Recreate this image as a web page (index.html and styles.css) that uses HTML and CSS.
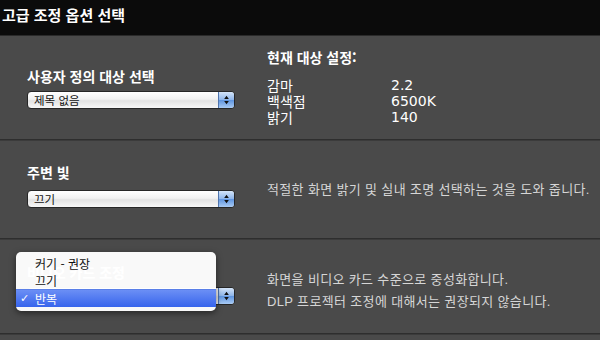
FILE: index.html
```html
<!DOCTYPE html>
<html lang="ko">
<head>
<meta charset="UTF-8">
<title>고급 조정 옵션 선택</title>
<link rel="stylesheet" href="styles.css">
</head>
<body>
  <div class="titlebar">고급 조정 옵션 선택</div>

  <div class="section sec-target">
    <div class="left">
      <div class="label">사용자 정의 대상 선택</div>
      <div class="select">
        <span class="value">제목 없음</span>
        <span class="stepper"><svg viewBox="0 0 16 16"><path d="M8 3.5 L10.5 7 H5.5 Z M8 12.5 L10.5 9 H5.5 Z" fill="#111"/></svg></span>
      </div>
    </div>
    <div class="right">
      <div class="heading">현재 대상 설정:</div>
      <table class="settings">
        <tr><td>감마</td><td>2.2</td></tr>
        <tr><td>백색점</td><td>6500K</td></tr>
        <tr><td>밝기</td><td>140</td></tr>
      </table>
    </div>
  </div>

  <div class="section sec-ambient">
    <div class="left">
      <div class="label">주변 빛</div>
      <div class="select">
        <span class="value">끄기</span>
        <span class="stepper"><svg viewBox="0 0 16 16"><path d="M8 3.5 L10.5 7 H5.5 Z M8 12.5 L10.5 9 H5.5 Z" fill="#111"/></svg></span>
      </div>
    </div>
    <div class="right">
      <p class="desc">적절한 화면 밝기 및 실내 조명 선택하는 것을 도와 줍니다.</p>
    </div>
  </div>

  <div class="section sec-video">
    <div class="left">
      <div class="label">비디오 카드 조정</div>
      <div class="select">
        <span class="value"></span>
        <span class="stepper"><svg viewBox="0 0 16 16"><path d="M8 3.5 L10.5 7 H5.5 Z M8 12.5 L10.5 9 H5.5 Z" fill="#111"/></svg></span>
      </div>
    </div>
    <div class="right">
      <p class="desc">화면을 비디오 카드 수준으로 중성화합니다.<br>DLP 프로젝터 조정에 대해서는 권장되지 않습니다.</p>
    </div>
    <!-- 열린 팝업 메뉴 -->
    <ul class="menu">
      <li>커기 - 권장</li>
      <li>끄기</li>
      <li class="selected"><span class="check">✓</span>반복</li>
    </ul>
  </div>
</body>
</html>
```

FILE: styles.css
```css
body {
  margin: 0;
  background: #4a4a4a;
  color: #fff;
  font-family: "DejaVu Sans", "Noto Sans CJK KR", sans-serif;
  height: 340px;
  overflow: hidden;
}
.titlebar {
  height: 36px;
  box-sizing: border-box;
  padding: 5px 2px;
  line-height: 20px;
  background: #0b0b0b;
  border-bottom: 1px solid #2a2a2a;
  font-family: "Noto Sans CJK KR", sans-serif;
  font-size: 15px;
  font-weight: bold;
}
.section {
  display: flex;
  align-items: center;
  position: relative;
  border-bottom: 1px solid #2e2e2e;
  box-shadow: 0 1px 0 #3b3b3b;
}
.sec-target { height: 103px; }
.sec-ambient { height: 97px; margin-top: 1px; }
.sec-video { height: 93px; margin-top: 1px; }
.left {
  width: 208px;
  margin-left: 27px;
}
.sec-ambient .left { margin-top: -8px; }
.sec-video .left { margin-top: -6px; }
.right {
  margin-left: 32px;
}
.sec-target .right { margin-top: -3px; }
.sec-video .right { margin-top: 8px; }
.label {
  font-family: "Noto Sans CJK KR", sans-serif;
  font-size: 14px;
  font-weight: bold;
  line-height: 18px;
  margin-bottom: 6px;
}
.sec-ambient .label { margin-bottom: 9px; }
.select {
  display: flex;
  height: 18px;
  box-sizing: border-box;
  border: 1px solid #262626;
  border-radius: 4px;
  background: linear-gradient(#ffffff, #f1f1f1 45%, #e2e2e2 55%, #f7f7f7);
  overflow: hidden;
}
.select .value {
  flex: 1;
  padding-left: 6px;
  color: #111;
  font-family: "Noto Sans CJK KR", sans-serif;
  font-size: 11.5px;
  line-height: 16px;
}
.stepper {
  width: 15px;
  border-left: 1px solid #4f74ad;
  background: linear-gradient(#d4e4f8, #8fb6ea 48%, #5f95e0 52%, #a9cbf4);
}
.stepper svg {
  width: 15px;
  height: 16px;
  display: block;
}
.heading {
  font-family: "Noto Sans CJK KR", sans-serif;
  font-size: 14px;
  font-weight: bold;
  line-height: 18px;
  margin-bottom: 11px;
}
.settings {
  border-collapse: collapse;
  font-size: 14px;
  line-height: 16px;
}
.settings td {
  padding: 0;
}
.settings td:first-child {
  width: 124px;
  font-family: "Noto Sans CJK KR", sans-serif;
}
.settings td:last-child {
  font-family: "DejaVu Sans", sans-serif;
}
.desc {
  margin: 0;
  color: #d6d6d6;
  font-size: 13px;
  letter-spacing: 0.35px;
  line-height: 22px;
  font-family: "Liberation Sans", "Noto Sans CJK KR", sans-serif;
}
.menu {
  position: absolute;
  left: 16px;
  top: 12px;
  width: 200px;
  margin: 0;
  padding: 3px 0 4px;
  list-style: none;
  background: rgba(255, 255, 255, 0.97);
  border-radius: 5px;
  box-shadow: 0 2px 6px rgba(0, 0, 0, 0.5);
  color: #111;
  font-family: "Noto Sans CJK KR", sans-serif;
  font-size: 12px;
  line-height: 17px;
}
.menu li {
  padding-left: 19px;
  position: relative;
}
.menu .selected {
  color: #fff;
  background: linear-gradient(#6b8ff5, #3764ec);
  border-top: 1px solid #5a7fe8;
}
.check {
  position: absolute;
  left: 4px;
  font-family: "DejaVu Sans", sans-serif;
  font-size: 11px;
}
```
